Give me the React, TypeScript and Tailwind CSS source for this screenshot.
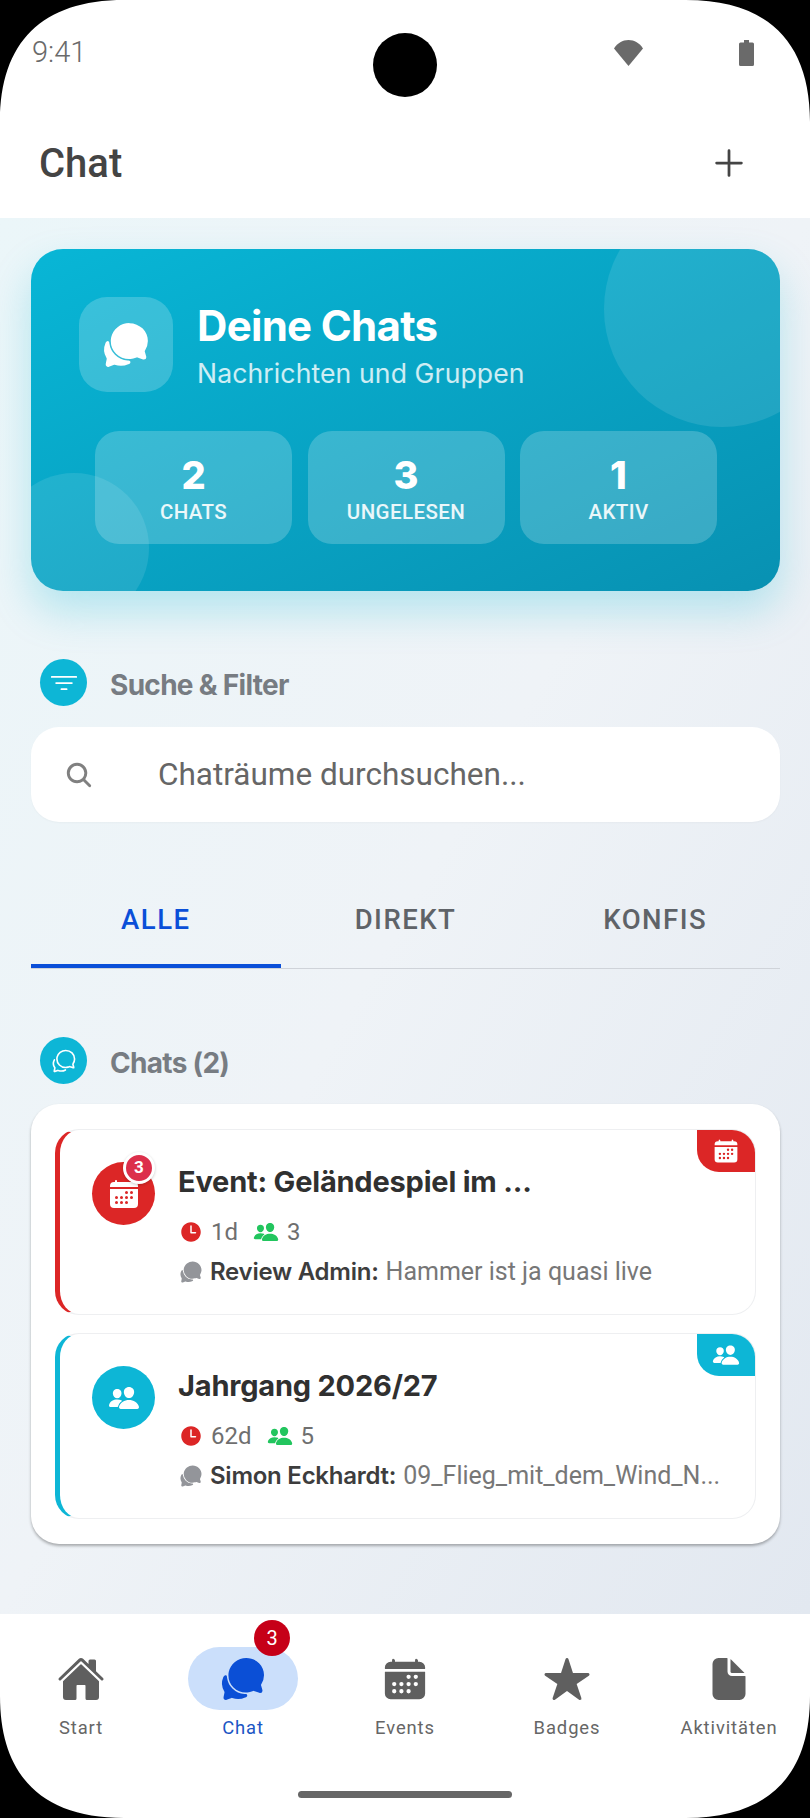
import {
  IoAddOutline,
  IoCalendar,
  IoChatbubbles,
  IoChatbubblesOutline,
  IoDocument,
  IoFilterOutline,
  IoHome,
  IoPeople,
  IoSearch,
  IoStar,
  IoTime,
} from "react-icons/io5";
import type { ReactNode } from "react";

const roboto = "font-['Roboto',sans-serif]";
const inter = "font-['Inter',sans-serif]";

const Stat = ({ value, label }: { value: string; label: string }) => (
  <div className="flex h-[113px] w-[197px] flex-col items-center rounded-[24px] bg-white/20 pt-[21px] text-white">
    <span className={`${inter} text-[38px] leading-[46px] font-extrabold`}>{value}</span>
    <span className={`${roboto} mt-[1px] text-[20.5px] leading-[26px] font-medium tracking-[0.4px] text-white/90`}>{label}</span>
  </div>
);

const SectionHeader = ({ icon, title }: { icon: ReactNode; title: string }) => (
  <div className="flex h-[47px] items-center gap-[23px] pl-[9px]">
    <div className="flex h-[47px] w-[47px] items-center justify-center rounded-full bg-[#0db6d6] text-white">{icon}</div>
    <span className={`${inter} pt-[4px] text-[28px] font-bold tracking-[-0.7px] text-[#777c82]`}>{title}</span>
  </div>
);

type ChatItemProps = {
  accent: string;
  tag: string;
  avatar: string;
  icon: ReactNode;
  tagIcon: ReactNode;
  title: string;
  age: string;
  members: string;
  sender: string;
  message: string;
};

const ChatItem = ({ accent, tag, avatar, icon, tagIcon, title, age, members, sender, message }: ChatItemProps) => (
  <div className={`relative flex h-[186px] gap-[24px] overflow-hidden rounded-[24px] border border-l-[5px] border-[#eeeff1] pt-[32px] pl-[32px] ${accent}`}>
    <div className={`relative flex h-[63px] w-[63px] shrink-0 items-center justify-center rounded-full text-white ${avatar}`}>{icon}</div>
    <div className="flex flex-col">
      <div className={`${inter} mt-[-2px] ml-[-1px] h-[44px] text-[29px] leading-[44px] font-bold tracking-[-0.2px] text-[#303030]`}>{title}</div>
      <div className={`${roboto} mt-[14px] flex h-[28px] items-center text-[24px] text-[#6f6f6f]`}>
        <IoTime className="h-[24px] w-[24px] text-[#dc2626]" />
        <span className="ml-[8px]">{age}</span>
        <IoPeople className="ml-[15px] h-[26px] w-[26px] text-[#22c55e]" />
        <span className="ml-[8px]">{members}</span>
      </div>
      <div className="mt-[12px] flex h-[28px] items-center whitespace-nowrap">
        <IoChatbubbles className="h-[24px] w-[24px] text-[#93959a]" />
        <span className={`${inter} ml-[7px] text-[24px] font-semibold tracking-[-0.25px] text-[#3d3d3d]`}>{sender}</span>
        <span className={`${roboto} ml-[7px] text-[25px] text-[#777777]`}>{message}</span>
      </div>
    </div>
    <div className={`absolute top-0 right-0 flex h-[42px] w-[58px] items-center justify-center rounded-bl-[22px] text-white ${tag}`}>{tagIcon}</div>
  </div>
);

const NavItem = ({ icon, label, active }: { icon: ReactNode; label: string; active?: boolean }) => (
  <div className="relative flex flex-col items-center">
    <div className={`flex h-[63px] w-[110px] items-center justify-center rounded-full ${active ? "bg-[#cbdffb] text-[#0b4fd6]" : "text-[#5f5f5f]"}`}>{icon}</div>
    <span className={`${roboto} mt-[4px] text-[18.4px] leading-[28px] tracking-[0.9px] ${active ? "text-[#1b56c4]" : "text-[#666666]"}`}>{label}</span>
    {active && (
      <span className={`${roboto} absolute top-[-27px] left-[92px] flex h-[36px] w-[36px] items-center justify-center rounded-full bg-[#c60018] text-[20px] text-white`}>3</span>
    )}
  </div>
);

// the device outline: softer than a plain circular radius
const Corner = ({ className }: { className: string }) => (
  <svg viewBox="0 0 124 122" className={`absolute h-[122px] w-[124px] ${className}`} fill="#000000">
    <path d="M0 0H124C42 0 0 42 0 122Z" />
  </svg>
);

export default function App() {
  return (
    <div className="h-[1818px] w-[810px] bg-black">
      <div className="relative flex h-full w-full flex-col overflow-hidden bg-white">
        {/* status bar */}
        <div className={`${roboto} flex h-[114px] items-start justify-between pt-[35px] pr-[56px] pl-[32px] text-[#6a6a6a]`}>
          <span className="text-[29px] leading-[34px] font-light">9:41</span>
          <div className="flex items-center gap-[96px] pt-[5px]">
            <svg viewBox="0 0 29 26" className="h-[26px] w-[29px]" fill="#6a6a6a">
              <path d="M14.5 26 0 8.5C3.5 3 8.5 0 14.5 0s11 3 14.5 8.5Z" />
            </svg>
            <svg viewBox="0 0 15 26" className="h-[26px] w-[15px]" fill="#6a6a6a">
              <path d="M5 0h5v2.5h3.5a1.5 1.5 0 0 1 1.5 1.5v20.5a1.5 1.5 0 0 1-1.5 1.5h-12A1.5 1.5 0 0 1 0 24.5V4a1.5 1.5 0 0 1 1.5-1.5H5Z" />
            </svg>
          </div>
        </div>
        <div className="absolute top-[33px] left-[373px] h-[64px] w-[64px] rounded-full bg-black" />

        {/* header */}
        <div className="flex h-[104px] items-start justify-between pr-[59px] pl-[39px]">
          <span className={`${roboto} text-[40px] leading-[100px] font-medium text-[#444444]`}>Chat</span>
          <IoAddOutline className="mt-[27px] h-[44px] w-[44px] text-[#444444]" />
        </div>

        {/* content */}
        <div className="flex flex-1 flex-col bg-gradient-to-br from-[#ebf6f9] via-[#eff3f7] to-[#e2e8f0] pt-[31px] pr-[30px] pl-[31px]">
          <div className="relative h-[342px] overflow-hidden rounded-[32px] bg-gradient-to-br from-[#08b6d6] to-[#0891b2] pt-[48px] pl-[48px] shadow-[0_20px_40px_rgba(6,182,212,0.25)]">
            <div className="absolute top-[-58px] right-[-60px] h-[236px] w-[236px] rounded-full bg-white/10" />
            <div className="absolute bottom-[-32px] left-[-32px] h-[150px] w-[150px] rounded-full bg-white/10" />
            <div className="relative flex items-start gap-[25px]">
              <div className="flex h-[95px] w-[94px] items-center justify-center rounded-[28px] bg-white/20">
                <IoChatbubbles className="h-[50px] w-[50px] text-white" />
              </div>
              <div className="flex flex-col text-white">
                <span className={`${inter} mt-[4px] ml-[-1px] text-[42px] leading-[50px] font-bold tracking-[-0.7px]`}>Deine Chats</span>
                <span className={`${inter} mt-[6px] ml-[-1px] text-[26.6px] leading-[32px] tracking-[0.1px] text-white/80`}>Nachrichten und Gruppen</span>
              </div>
            </div>
            <div className="relative mt-[39px] flex gap-[15.5px] pl-[16px]">
              <Stat value="2" label="CHATS" />
              <Stat value="3" label="UNGELESEN" />
              <Stat value="1" label="AKTIV" />
            </div>
          </div>

          <div className="mt-[68px]">
            <SectionHeader icon={<IoFilterOutline className="h-[28px] w-[28px]" />} title="Suche & Filter" />
          </div>

          <div className="mt-[21px] flex h-[95px] items-center rounded-[28px] bg-white pl-[33px] shadow-[0_1px_2px_rgba(0,0,0,0.03)]">
            <IoSearch className="h-[30px] w-[30px] text-[#808080]" />
            <span className={`${roboto} ml-[64px] text-[31.5px] text-[#666666]`}>Chaträume durchsuchen...</span>
          </div>

          <div className="mt-[51px] flex h-[96px] border-b border-[#cfd3d9]">
            <div className={`${roboto} flex flex-1 items-center justify-center border-b-[4px] border-[#0a4fd8] pt-[2px] text-[27.5px] font-medium tracking-[1.5px] text-[#0a4fd8]`}>ALLE</div>
            <div className={`${roboto} flex flex-1 items-center justify-center pb-[1px] text-[27.5px] font-medium tracking-[1.5px] text-[#5f6368]`}>DIREKT</div>
            <div className={`${roboto} flex flex-1 items-center justify-center pb-[1px] text-[27.5px] font-medium tracking-[1.5px] text-[#5f6368]`}>KONFIS</div>
          </div>

          <div className="mt-[68px]">
            <SectionHeader icon={<IoChatbubblesOutline className="h-[26px] w-[26px]" />} title="Chats (2)" />
          </div>

          <div className="mt-[20px] flex flex-col gap-[18px] rounded-[28px] bg-white px-[24px] py-[25px] shadow-[0_2px_3px_rgba(0,0,0,0.3)]">
            <div className="relative">
              <ChatItem
                accent="border-l-[#dc2626]"
                tag="bg-[#dc2626]"
                avatar="bg-[#dc2626]"
                icon={<IoCalendar className="h-[32px] w-[32px]" />}
                tagIcon={<IoCalendar className="h-[26px] w-[26px]" />}
                title="Event: Geländespiel im ..."
                age="1d"
                members="3"
                sender="Review Admin:"
                message="Hammer ist ja quasi live"
              />
              <span className={`${roboto} absolute top-[23px] left-[68px] flex h-[32px] w-[32px] items-center justify-center rounded-full border-[3px] border-white bg-[#dc2f4b] text-[17px] font-bold text-white shadow-[0_1px_3px_rgba(0,0,0,0.2)]`}>3</span>
            </div>
            <ChatItem
              accent="border-l-[#0db6d6]"
              tag="bg-[#0db6d6]"
              avatar="bg-[#0db6d6]"
              icon={<IoPeople className="h-[32px] w-[32px]" />}
              tagIcon={<IoPeople className="h-[28px] w-[28px]" />}
              title="Jahrgang 2026/27"
              age="62d"
              members="5"
              sender="Simon Eckhardt:"
              message="09_Flieg_mit_dem_Wind_N..."
            />
          </div>
        </div>

        {/* bottom nav */}
        <div className="relative h-[204px] bg-white pt-[33px]">
          <div className="grid grid-cols-5">
            <NavItem icon={<IoHome className="h-[48px] w-[48px]" />} label="Start" />
            <NavItem active icon={<IoChatbubbles className="h-[48px] w-[48px]" />} label="Chat" />
            <NavItem icon={<IoCalendar className="h-[46px] w-[46px]" />} label="Events" />
            <NavItem icon={<IoStar className="h-[48px] w-[48px]" />} label="Badges" />
            <NavItem icon={<IoDocument className="h-[48px] w-[48px]" />} label="Aktivitäten" />
          </div>
          <div className="absolute bottom-[20px] left-[298px] h-[7px] w-[214px] rounded-full bg-[#666666]" />
        </div>

        <Corner className="top-0 left-0" />
        <Corner className="top-0 right-0 -scale-x-100" />
        <Corner className="bottom-0 left-0 -scale-y-100" />
        <Corner className="right-0 bottom-0 rotate-180" />
      </div>
    </div>
  );
}
